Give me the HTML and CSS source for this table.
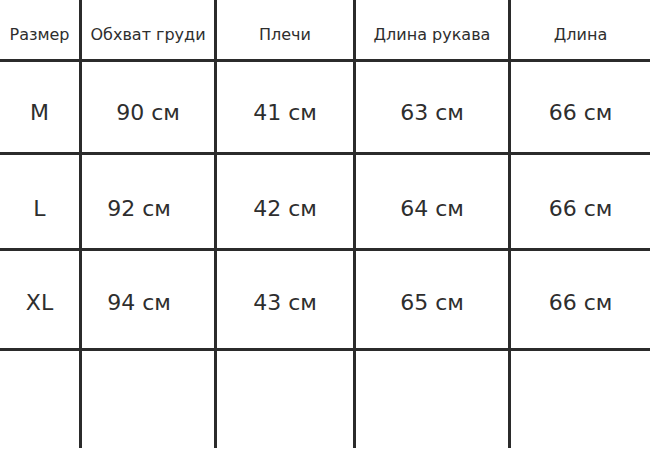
FILE: index.html
```html
<!DOCTYPE html>
<html lang="ru">
<head>
<meta charset="utf-8">
<title>Размеры</title>
<link rel="stylesheet" href="styles.css">
</head>
<body>
<div class="table">
  <div class="cell head">Размер</div>
  <div class="cell head">Обхват груди</div>
  <div class="cell head">Плечи</div>
  <div class="cell head">Длина рукава</div>
  <div class="cell head">Длина</div>

  <div class="cell val r1">M</div>
  <div class="cell val r1">90 см</div>
  <div class="cell val r1">41 см</div>
  <div class="cell val r1">63 см</div>
  <div class="cell val r1">66 см</div>

  <div class="cell val r2">L</div>
  <div class="cell val r2 shift">92 см</div>
  <div class="cell val r2">42 см</div>
  <div class="cell val r2">64 см</div>
  <div class="cell val r2">66 см</div>

  <div class="cell val r3">XL</div>
  <div class="cell val r3 shift">94 см</div>
  <div class="cell val r3">43 см</div>
  <div class="cell val r3">65 см</div>
  <div class="cell val r3">66 см</div>

  <div class="cell"></div>
  <div class="cell"></div>
  <div class="cell"></div>
  <div class="cell"></div>
  <div class="cell"></div>
</div>
</body>
</html>
```

FILE: styles.css
```css
html, body {
  margin: 0;
  padding: 0;
  background: #ffffff;
}

body {
  width: 650px;
  height: 450px;
  overflow: hidden;
  font-family: "DejaVu Sans", "Liberation Sans", sans-serif;
  color: #2e2e2e;
}

.table {
  display: grid;
  grid-template-columns: 79px 132px 136px 152px 139px;
  grid-template-rows: 59px 90px 93px 97px 97px;
  gap: 3px;
  background: #2b2b2b;
}

.cell {
  background: #ffffff;
  display: flex;
  align-items: center;
  justify-content: center;
  white-space: nowrap;
}

.head {
  font-size: 16px;
  padding-top: 9px;
}

.val {
  font-size: 22px;
}

.r1 {
  padding-top: 10px;
}

.r2 {
  padding-top: 13px;
}

.r3 {
  padding-top: 5px;
}

.shift {
  padding-right: 18px;
}
```
